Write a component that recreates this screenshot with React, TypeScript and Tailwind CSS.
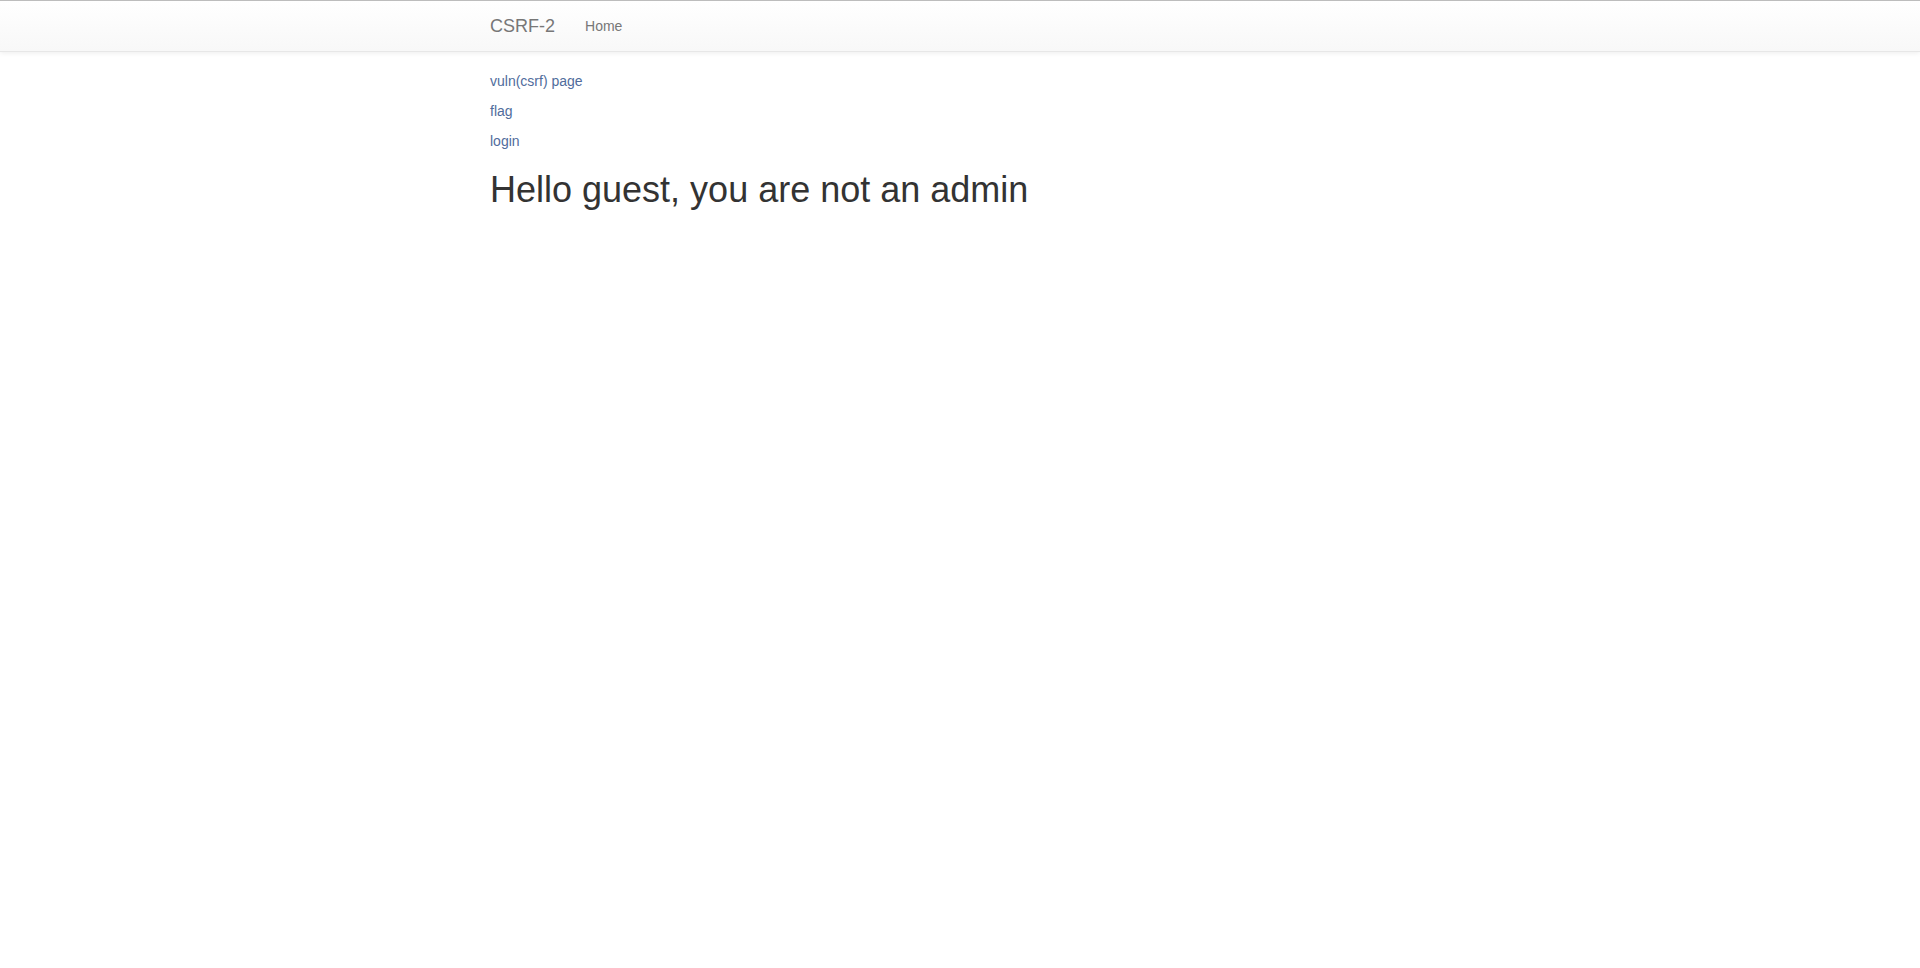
import React from 'react';

const links = ['vuln(csrf) page', 'flag', 'login'];

export default function App() {
  return (
    <div className="min-h-screen bg-white text-[14px] leading-[20px] text-[#333] font-['Liberation_Sans',Arial,sans-serif]">
      <nav className="border-t border-t-[#bdbdbd] border-b border-b-[#e7e7e7] bg-linear-to-b from-white to-[#f8f8f8] shadow-[0_1px_5px_rgba(0,0,0,0.075)] mb-[19px]">
        <div className="w-[940px] mx-auto flex items-center h-[50px]">
          <a href="#" className="text-[18px] leading-[20px] text-[#777] pr-[15px] py-[15px] [text-shadow:0_1px_0_rgba(255,255,255,0.25)]">
            CSRF-2
          </a>
          <ul className="flex">
            <li>
              <a href="#" className="block px-[15px] py-[15px] text-[#777] [text-shadow:0_1px_0_rgba(255,255,255,0.25)]">
                Home
              </a>
            </li>
          </ul>
        </div>
      </nav>

      <div className="w-[940px] mx-auto">
        {links.map((l) => (
          <p key={l} className="mb-[10px]">
            <a href="#" className="text-[#506c9c]">
              {l}
            </a>
          </p>
        ))}
        <h1 className="mt-[19px] mb-[10px] text-[36px] leading-[1.1] font-normal text-[#333]">
          Hello guest, you are not an admin
        </h1>
      </div>
    </div>
  );
}
